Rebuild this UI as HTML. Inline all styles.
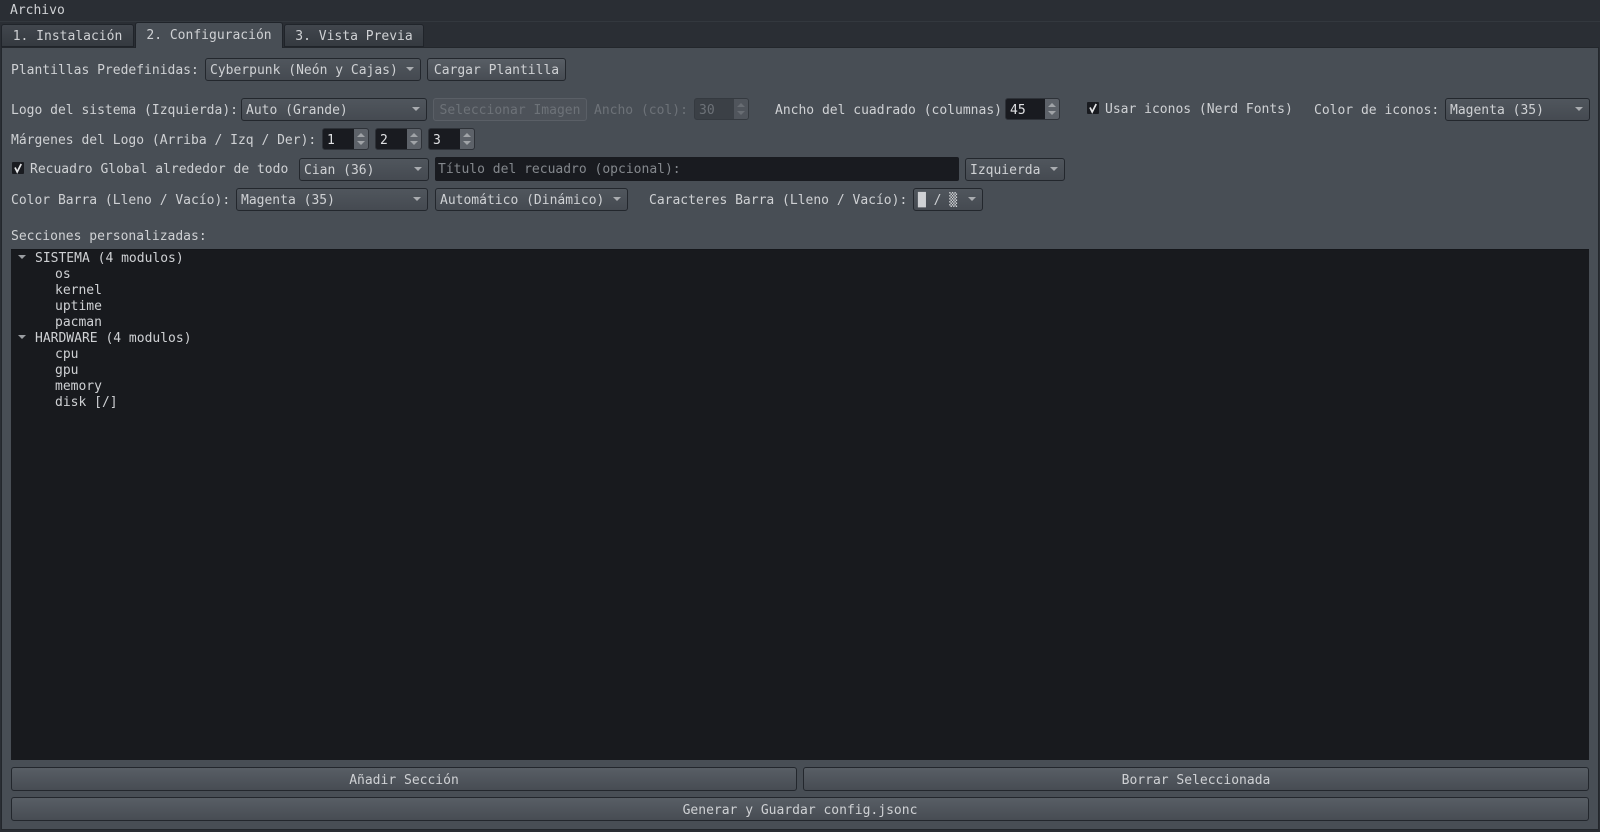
<!DOCTYPE html>
<html lang="es">
<head>
<meta charset="utf-8">
<style>
html,body{margin:0;padding:0;width:1600px;height:832px;overflow:hidden;background:#2a2e34}
body{font-family:"DejaVu Sans Mono","Liberation Mono",monospace;font-size:13px;color:#cfd1d4;position:relative}
.a{position:absolute;white-space:pre;box-sizing:border-box}
.t{position:absolute;white-space:pre;line-height:16px;height:16px}
.menu{left:0;top:0;width:1600px;height:22px;background:#2a2e34;border-bottom:1px solid #33383e}
.tab{top:24px;height:23px;background:linear-gradient(#41464d,#353a40);border:1px solid #20242a;border-radius:3px 3px 0 0;line-height:24px;text-align:center}
.tab.on{top:22px;height:26px;background:#484e55;border-color:#20242a;border-bottom:none;line-height:26px;z-index:3}
.pane{left:1px;top:47px;width:1598px;height:783px;background:#484e55;border:1px solid #23272c}
.c{height:23px;background:linear-gradient(#50565d,#454a51);border:1px solid #23272d;border-radius:3px;line-height:24px;padding-left:4px}
.c:after{content:"";position:absolute;right:6px;top:8px;border-left:4px solid transparent;border-right:4px solid transparent;border-top:4px solid #a9acb0}
.b{height:24px;background:linear-gradient(#585e65,#474c53);border:1px solid #23272d;border-radius:3px;line-height:26px;text-align:center}
.s{height:22px;background:#191b20;border-radius:3px;border:1px solid #2e3238;line-height:24px;padding-left:4px;color:#e0e1e3}
.s i{position:absolute;right:0;top:0;width:14px;height:20px;background:#5d6269;border-radius:0 2px 2px 0}
.s i:before{content:"";position:absolute;left:3px;top:4px;border-left:4px solid transparent;border-right:4px solid transparent;border-bottom:4px solid #a0a3a7}
.s i:after{content:"";position:absolute;left:3px;top:12px;border-left:4px solid transparent;border-right:4px solid transparent;border-top:4px solid #a0a3a7}
.s.d{background:#3b4046;color:#6d7278;border-color:#353a40}
.s.d i{background:#50555c}
.s.d i:before{border-bottom-color:#686d73}
.s.d i:after{border-top-color:#686d73}
.k{width:12px;height:12px;background:#191b20;border-radius:1px}
.tree{left:11px;top:249px;width:1578px;height:511px;background:#181a1e;border-top:1px solid #15171b}
.ar{position:absolute;left:18px;border-left:4px solid transparent;border-right:4px solid transparent;border-top:4px solid #9a9da1}
.dim{color:#6d7278}
</style>
</head>
<body>
<div class="a menu"></div>
<div class="t" style="left:10px;top:3px">Archivo</div>
<div class="a pane"></div>
<div class="a tab" style="left:1px;width:133px">1. Instalación</div>
<div class="a tab on" style="left:135px;width:148px">2. Configuración</div>
<div class="a tab" style="left:284px;width:140px">3. Vista Previa</div>

<div class="t" style="left:11px;top:63px">Plantillas Predefinidas:</div>
<div class="a c" style="left:205px;top:58px;width:216px">Cyberpunk (Neón y Cajas)</div>
<div class="a b" style="left:427px;top:58px;width:139px;height:23px;line-height:24px">Cargar Plantilla</div>

<div class="t" style="left:11px;top:103px">Logo del sistema (Izquierda):</div>
<div class="a c" style="left:241px;top:98px;width:186px">Auto (Grande)</div>
<div class="a b dim" style="left:433px;top:98px;width:154px;height:23px;line-height:24px;background:#4d5259;border-color:#5a5f66">Seleccionar Imagen</div>
<div class="t dim" style="left:594px;top:103px">Ancho (col):</div>
<div class="a s d" style="left:694px;top:98px;width:55px">30<i></i></div>
<div class="t" style="left:775px;top:103px">Ancho del cuadrado (columnas)</div>
<div class="a s" style="left:1005px;top:98px;width:55px">45<i></i></div>
<div class="a k" style="left:1087px;top:102px"></div>
<svg class="a" style="left:1087px;top:102px" width="12" height="12" viewBox="0 0 12 12"><path d="M3 5.5 L5.2 10 L9.2 2" fill="none" stroke="#e6e7e9" stroke-width="1.7"/></svg>
<div class="t" style="left:1105px;top:102px">Usar iconos (Nerd Fonts)</div>
<div class="t" style="left:1314px;top:103px">Color de iconos:</div>
<div class="a c" style="left:1445px;top:98px;width:145px">Magenta (35)</div>

<div class="t" style="left:11px;top:133px">Márgenes del Logo (Arriba / Izq / Der):</div>
<div class="a s" style="left:322px;top:128px;width:47px">1<i></i></div>
<div class="a s" style="left:375px;top:128px;width:47px">2<i></i></div>
<div class="a s" style="left:428px;top:128px;width:47px">3<i></i></div>

<div class="a k" style="left:12px;top:162px"></div>
<svg class="a" style="left:12px;top:162px" width="12" height="12" viewBox="0 0 12 12"><path d="M3 5.5 L5.2 10 L9.2 2" fill="none" stroke="#e6e7e9" stroke-width="1.7"/></svg>
<div class="t" style="left:30px;top:162px">Recuadro Global alrededor de todo</div>
<div class="a c" style="left:299px;top:158px;width:130px">Cian (36)</div>
<div class="a" style="left:435px;top:157px;width:524px;height:24px;background:#191b20;border-radius:2px;line-height:26px;padding-left:3px;color:#84888d">Título del recuadro (opcional):</div>
<div class="a c" style="left:965px;top:158px;width:100px">Izquierda</div>

<div class="t" style="left:11px;top:193px">Color Barra (Lleno / Vacío):</div>
<div class="a c" style="left:236px;top:188px;width:192px">Magenta (35)</div>
<div class="a c" style="left:435px;top:188px;width:193px">Automático (Dinámico)</div>
<div class="t" style="left:649px;top:193px">Caracteres Barra (Lleno / Vacío):</div>
<div class="a c" style="left:913px;top:188px;width:70px">█ / ▒</div>

<div class="t" style="left:11px;top:229px">Secciones personalizadas:</div>
<div class="a tree"></div>
<div class="ar" style="top:255px"></div>
<div class="t" style="left:35px;top:251px">SISTEMA (4 modulos)</div>
<div class="t" style="left:55px;top:267px">os</div>
<div class="t" style="left:55px;top:283px">kernel</div>
<div class="t" style="left:55px;top:299px">uptime</div>
<div class="t" style="left:55px;top:315px">pacman</div>
<div class="ar" style="top:335px"></div>
<div class="t" style="left:35px;top:331px">HARDWARE (4 modulos)</div>
<div class="t" style="left:55px;top:347px">cpu</div>
<div class="t" style="left:55px;top:363px">gpu</div>
<div class="t" style="left:55px;top:379px">memory</div>
<div class="t" style="left:55px;top:395px">disk [/]</div>

<div class="a b" style="left:11px;top:767px;width:786px">Añadir Sección</div>
<div class="a b" style="left:803px;top:767px;width:786px">Borrar Seleccionada</div>
<div class="a b" style="left:11px;top:797px;width:1578px">Generar y Guardar config.jsonc</div>
</body>
</html>
